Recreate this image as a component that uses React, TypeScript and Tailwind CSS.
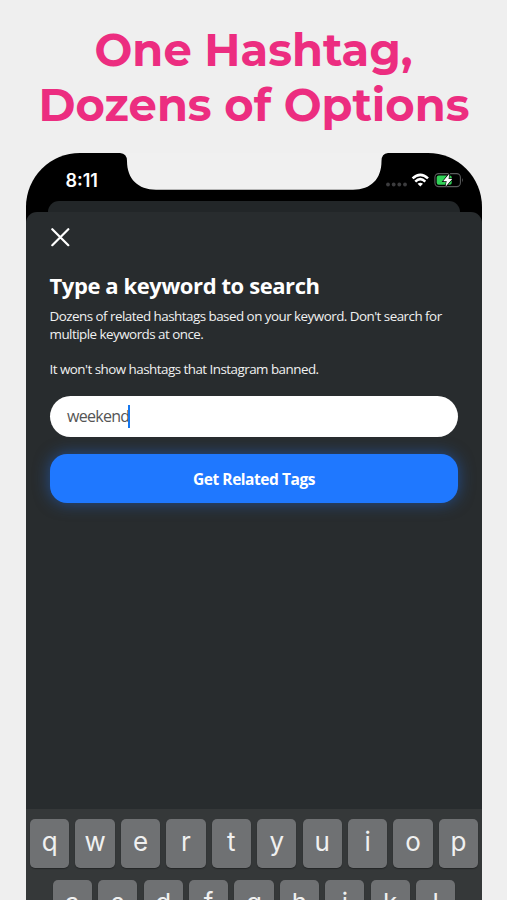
import React from 'react';

const topKeys = ['q', 'w', 'e', 'r', 't', 'y', 'u', 'i', 'o', 'p'];
const homeKeys = ['a', 's', 'd', 'f', 'g', 'h', 'j', 'k', 'l'];

function Key({ label }: { label: string }) {
  return (
    <div className="flex h-[49.5px] min-w-0 flex-1 items-center justify-center rounded-[5px] bg-[#6f7173] pb-[3px] font-['Inter',sans-serif] text-[26px] font-normal leading-none text-[#f0f0f0] shadow-[0_1px_1px_#242627]">
      {label}
    </div>
  );
}

function StatusIcons() {
  return (
    <svg className="h-[18px] w-[80px]" viewBox="385 171 80 18" fill="none">
      <g fill="#3c3c3e">
        <circle cx="388" cy="184.5" r="1.9" />
        <circle cx="393.7" cy="184.5" r="1.9" />
        <circle cx="399.3" cy="184.5" r="1.9" />
        <circle cx="405" cy="184.5" r="1.9" />
      </g>
      <g stroke="#fff" strokeWidth="2.6">
        <path d="M412.6 178.4 Q420.3 171.2 428 178.4" />
        <path d="M415.3 181.6 Q420.3 176.8 425.3 181.6" />
      </g>
      <path d="M417.6 183.8 Q420.3 181.5 423 183.8 L420.3 186.6 Z" fill="#fff" />
      <rect x="434.9" y="173.6" width="25.5" height="13" rx="3.8" stroke="#5a5b5c" strokeWidth="1.1" />
      <path d="M462 178 Q463.8 180.1 462 182.4 Z" fill="#656667" />
      <rect x="436.7" y="175.4" width="15" height="9.4" rx="2" fill="#31d158" />
      <path d="M449 174.4 L443.6 181.1 H447 L446 185.8 L451.8 179 H448.2 Z" fill="#fff" stroke="#000" strokeWidth="1.8" paintOrder="stroke" />
      <path d="M449 174.4 L443.6 181.1 H447 L446 185.8 L451.8 179 H448.2 Z" fill="#fff" stroke="#fff" strokeWidth="0.4" />
    </svg>
  );
}

export default function App() {
  return (
    <main className="flex h-[900px] w-[507px] flex-col overflow-hidden bg-[#efefef]">
      <header className="h-[153px] shrink-0 pt-[23px] text-center font-['Montserrat','Inter',sans-serif] text-[44.8px] font-bold leading-[55px] text-[#ec2d80]">
        <div className="whitespace-nowrap">One Hashtag,</div>
        <div className="whitespace-nowrap pl-[1px]">Dozens of Options</div>
      </header>

      <section className="relative ml-[26px] flex h-[747px] w-[456px] shrink-0 flex-col overflow-hidden rounded-t-[54px] bg-black font-['Open_Sans',sans-serif]">
        <svg className="absolute left-[94px] top-0 h-[38px] w-[268px]" viewBox="120 153 268 38">
          <path d="M120 152 V153 Q127 153.5 127 161 C127 179 138 189.7 156 189.7 H353 C371 189.7 381.5 179 381.5 161 Q381.5 153.5 388 153 V152 Z" fill="#f0f0f0" />
        </svg>
        <div className="flex h-[48px] shrink-0 items-start justify-between pl-[39.5px] pr-[17px] pt-[18px]">
          <time className="font-['Inter',sans-serif] text-[18px] font-semibold leading-[19px] text-white">8:11</time>
          <StatusIcons />
        </div>
        <div className="mx-[22px] h-[11px] shrink-0 rounded-t-[11px] bg-[#222628]" />
        <div className="flex flex-1 flex-col rounded-t-[11px] bg-[#282c2e]">
          <div className="flex flex-1 flex-col px-[24px] pt-[16px] text-[#f0f1f1]">
            <svg className="h-[19px] w-[20px]" viewBox="0 0 20 19" fill="none" stroke="#fff" strokeWidth="2.2" strokeLinecap="round">
              <path d="M2.3 1.2 L18.3 17.2 M18.3 1.2 L2.3 17.2" />
            </svg>
            <h1 className="-ml-[0.5px] mt-[22px] whitespace-nowrap text-[22px] font-bold leading-[32px] tracking-[-0.41px] text-white">Type a keyword to search</h1>
            <p className="-ml-[0.5px] mt-[7px] whitespace-nowrap text-[13.4px] leading-[17.7px] tracking-[-0.52px]">
              Dozens of related hashtags based on your keyword. Don't search for
              <br />
              multiple keywords at once.
              <br />
              <br />
              It won't show hashtags that Instagram banned.
            </p>
            <div className="mt-[17px] flex h-[41px] items-center rounded-full bg-white pl-[17px] text-[16px] tracking-[-0.7px] text-[#555]">
              weekend
              <span className="ml-[-1px] h-[23px] w-[2px] bg-[#1677ee]" />
            </div>
            <button className="mt-[17px] h-[49px] rounded-[17px] bg-[#1f78ff] pt-[2px] text-[15.5px] font-bold tracking-[-0.45px] text-white shadow-[0_0_16px_#1f66d199]">
              Get Related Tags
            </button>
          </div>
          <div className="flex h-[91px] shrink-0 flex-col gap-[12px] overflow-hidden bg-[#353839] px-[4px] pt-[9.5px]">
            <div className="flex gap-[6.2px]">
              {topKeys.map((key) => <Key key={key} label={key} />)}
            </div>
            <div className="flex gap-[6.2px] px-[22.7px]">
              {homeKeys.map((key) => <Key key={key} label={key} />)}
            </div>
          </div>
        </div>
      </section>
    </main>
  );
}
